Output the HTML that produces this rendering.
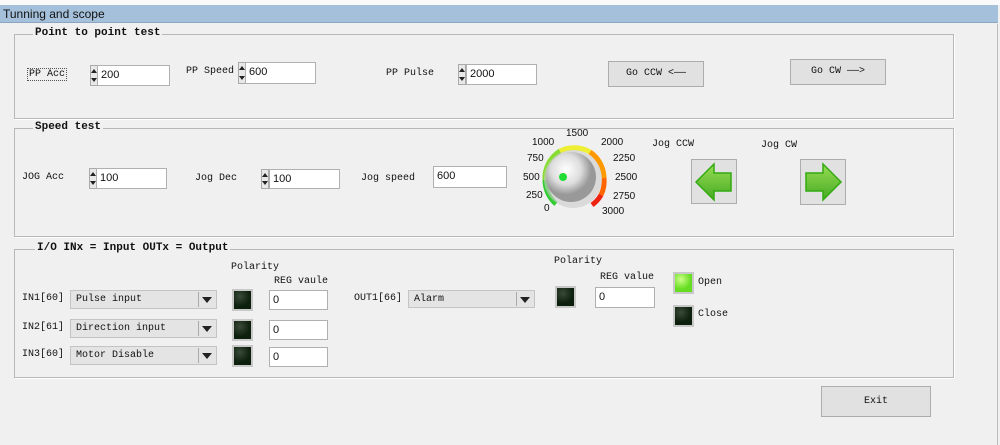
<!DOCTYPE html><html><head><style>
body{margin:0;width:1000px;height:445px;background:#f0f0f0;font-family:"Liberation Mono","DejaVu Sans Mono",monospace;font-size:10px;color:#111;position:relative;overflow:hidden}
.a{position:absolute}
.grp{position:absolute;border:1px solid #b8b8b8;box-shadow:1px 1px 0 #fff}
.gt{position:absolute;top:-8px;background:#f0f0f0;font-weight:bold;padding:0 2px;font-size:11px}
.in{position:absolute;background:#fff;border:1px solid #b0b0b0;font-family:"Liberation Sans",sans-serif;font-size:11px;line-height:18px;padding-left:3px;box-sizing:border-box}
.sp{position:absolute;width:8px;background:#e8e8e8;border:1px solid #aaa;box-sizing:border-box}
.sp:before{content:"";position:absolute;left:0px;top:3px;border:3px solid transparent;border-bottom:4px solid #222;border-top:0}
.sp:after{content:"";position:absolute;left:0px;bottom:3px;border:3px solid transparent;border-top:4px solid #222;border-bottom:0}
.btn{position:absolute;background:#e1e1e1;border:1px solid #adadad;box-sizing:border-box;text-align:center;font-size:10px}
.cb{position:absolute;background:#e4e4e4;border:1px solid #c4c4c4;box-sizing:border-box;padding-left:5px;line-height:17px;font-size:10px}
.cb:after{content:"";position:absolute;right:4px;top:6px;border:5px solid transparent;border-top:6px solid #222;border-bottom:0}
.cb i{position:absolute;right:17px;top:1px;bottom:1px;border-left:1px solid #aaa}
.led{position:absolute;width:21px;height:22px;background:radial-gradient(circle at 35% 30%,#3a4a3a,#0d1f0d 60%);border:2px solid #c8c8c8;box-sizing:border-box}
.t{position:absolute;font-size:10px;white-space:nowrap}
.n{position:absolute;font-family:"Liberation Sans",sans-serif;font-size:10px}
</style></head><body>
<div class="a" style="left:0;top:0;width:1000px;height:5px;background:#fafafa"></div>
<div class="a" style="left:0;top:5px;width:998px;height:18px;background:#a5c0da;border-bottom:1px solid #8aa6c2;font-family:'Liberation Sans',sans-serif;font-size:12px;line-height:18px;padding-left:3px;box-sizing:border-box">Tunning and scope</div>
<div class="a" style="left:997px;top:24px;width:1px;height:421px;background:#bbb"></div>

<div class="grp" style="left:14px;top:34px;width:938px;height:83px"><div class="gt" style="left:18px">Point to point test</div></div>
<div class="t" style="left:27px;top:68px;border:1px dotted #555;padding:0 1px">PP Acc</div>
<div class="sp" style="left:90px;top:65px;height:21px"></div><div class="in" style="left:97px;top:65px;width:73px;height:21px">200</div>
<div class="t" style="left:186px;top:66px">PP Speed</div>
<div class="sp" style="left:238px;top:62px;height:22px"></div><div class="in" style="left:245px;top:62px;width:71px;height:22px">600</div>
<div class="t" style="left:386px;top:68px">PP Pulse</div>
<div class="sp" style="left:458px;top:64px;height:21px"></div><div class="in" style="left:466px;top:64px;width:71px;height:21px">2000</div>
<div class="btn" style="left:608px;top:61px;width:96px;height:26px;line-height:24px">Go CCW &lt;——</div>
<div class="btn" style="left:790px;top:59px;width:96px;height:26px;line-height:24px">Go CW ——&gt;</div>

<div class="grp" style="left:14px;top:128px;width:938px;height:107px"><div class="gt" style="left:18px">Speed test</div></div>
<div class="t" style="left:22px;top:172px">JOG Acc</div>
<div class="sp" style="left:89px;top:168px;height:21px"></div><div class="in" style="left:96px;top:168px;width:71px;height:21px">100</div>
<div class="t" style="left:195px;top:173px">Jog Dec</div>
<div class="sp" style="left:261px;top:169px;height:20px"></div><div class="in" style="left:269px;top:169px;width:71px;height:20px">100</div>
<div class="t" style="left:361px;top:173px">Jog speed</div>
<div class="in" style="left:433px;top:166px;width:74px;height:22px">600</div>
<svg class="a" style="left:520px;top:125px" width="120" height="100" viewBox="520 125 120 100">
<defs><radialGradient id="k" cx="40%" cy="35%"><stop offset="0" stop-color="#fff"/><stop offset="0.6" stop-color="#ddd"/><stop offset="1" stop-color="#999"/></radialGradient></defs>
<path d="M556,204 A32,32 0 0 1 545,180" stroke="#3c3" stroke-width="5" fill="none"/>
<path d="M545,180 A32,32 0 0 1 560,151" stroke="#8d3" stroke-width="5" fill="none"/>
<path d="M560,151 A32,32 0 0 1 590,152" stroke="#ee3" stroke-width="5" fill="none"/>
<path d="M590,152 A32,32 0 0 1 604,178" stroke="#f90" stroke-width="5" fill="none"/>
<path d="M604,178 A32,32 0 0 1 601,195" stroke="#f60" stroke-width="5" fill="none"/>
<path d="M601,195 A32,32 0 0 1 592,205" stroke="#e21" stroke-width="5" fill="none"/>
<circle cx="573" cy="179" r="29" fill="#ccc" opacity="0.6"/>
<circle cx="571" cy="177" r="25" fill="url(#k)"/>
<circle cx="563" cy="177" r="4" fill="#2d3"/>
</svg>
<div class="n" style="left:532px;top:137px">1000</div><div class="n" style="left:566px;top:128px">1500</div><div class="n" style="left:601px;top:137px">2000</div>
<div class="n" style="left:527px;top:153px">750</div><div class="n" style="left:613px;top:153px">2250</div>
<div class="n" style="left:523px;top:172px">500</div><div class="n" style="left:615px;top:172px">2500</div>
<div class="n" style="left:526px;top:190px">250</div><div class="n" style="left:613px;top:191px">2750</div>
<div class="n" style="left:544px;top:203px">0</div><div class="n" style="left:602px;top:206px">3000</div>
<div class="t" style="left:652px;top:139px">Jog CCW</div><div class="t" style="left:761px;top:140px">Jog CW</div>
<div class="btn" style="left:691px;top:159px;width:46px;height:45px"><svg width="44" height="43"><defs><linearGradient id="g" x1="0" y1="0" x2="0" y2="1"><stop offset="0" stop-color="#9d5"/><stop offset="1" stop-color="#4a2"/></linearGradient></defs><path d="M4,22 L22,4 L22,13 L39,13 L39,31 L22,31 L22,40 Z" fill="url(#g)" stroke="#3a1" stroke-width="1.5"/></svg></div>
<div class="btn" style="left:800px;top:159px;width:46px;height:46px"><svg width="44" height="44"><path d="M40,22 L22,4 L22,13 L5,13 L5,31 L22,31 L22,40 Z" fill="url(#g)" stroke="#3a1" stroke-width="1.5"/></svg></div>

<div class="grp" style="left:14px;top:249px;width:938px;height:127px"><div class="gt" style="left:20px">I/O INx = Input OUTx = Output</div></div>
<div class="t" style="left:231px;top:262px">Polarity</div><div class="t" style="left:274px;top:276px">REG vaule</div>
<div class="t" style="left:22px;top:293px">IN1[60]</div><div class="cb" style="left:70px;top:290px;width:147px;height:19px">Pulse input<i></i></div>
<div class="led" style="left:232px;top:289px"></div><div class="in" style="left:269px;top:290px;width:59px;height:20px">0</div>
<div class="t" style="left:22px;top:322px">IN2[61]</div><div class="cb" style="left:70px;top:319px;width:147px;height:19px">Direction input<i></i></div>
<div class="led" style="left:232px;top:319px"></div><div class="in" style="left:269px;top:320px;width:59px;height:20px">0</div>
<div class="t" style="left:22px;top:349px">IN3[60]</div><div class="cb" style="left:70px;top:346px;width:147px;height:19px">Motor Disable<i></i></div>
<div class="led" style="left:232px;top:345px"></div><div class="in" style="left:269px;top:347px;width:59px;height:20px">0</div>
<div class="t" style="left:554px;top:256px">Polarity</div><div class="t" style="left:600px;top:272px">REG value</div>
<div class="t" style="left:354px;top:293px">OUT1[66]</div><div class="cb" style="left:408px;top:290px;width:127px;height:18px">Alarm<i></i></div>
<div class="led" style="left:555px;top:286px"></div><div class="in" style="left:595px;top:287px;width:60px;height:21px">0</div>
<div class="led" style="left:673px;top:272px;background:radial-gradient(circle at 35% 30%,#cf8,#6d2 60%)"></div><div class="t" style="left:698px;top:277px">Open</div>
<div class="led" style="left:673px;top:305px"></div><div class="t" style="left:698px;top:309px">Close</div>
<div class="btn" style="left:821px;top:386px;width:110px;height:31px;line-height:29px">Exit</div>
</body></html>
